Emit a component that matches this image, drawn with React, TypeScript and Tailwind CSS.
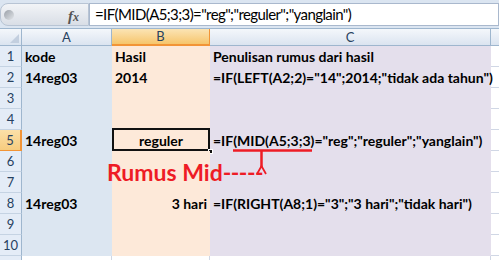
import React from "react";

const font = { fontFamily: "Lato, 'Open Sans', sans-serif" };

type Row = { n: number; a?: string; b?: string; bAlign?: "left" | "center" | "right"; c?: string; selB?: boolean };

const rows: Row[] = [
  { n: 1, a: "kode", b: "Hasil", c: "Penulisan rumus dari hasil" },
  { n: 2, a: "14reg03", b: "2014", c: '=IF(LEFT(A2;2)="14";2014;"tidak ada tahun")' },
  { n: 3 },
  { n: 4 },
  { n: 5, a: "14reg03", b: "reguler", bAlign: "center", c: '=IF(MID(A5;3;3)="reg";"reguler";"yanglain")', selB: true },
  { n: 6 },
  { n: 7 },
  { n: 8, a: "14reg03", b: "3 hari", bAlign: "right", c: '=IF(RIGHT(A8;1)="3";"3 hari";"tidak hari")' },
  { n: 9 },
  { n: 10 },
];

export default function App() {
  return (
    <div className="relative w-[499px] h-[260px] overflow-hidden bg-white" style={font}>
      {/* formula bar */}
      <div className="h-[29px] bg-[#dbe5f1] flex flex-col">
        <div className="h-[3px]" />
        <div className="h-[23px] flex">
          <div className="w-[89px] rounded-l-[8px] bg-gradient-to-b from-[#f2f4f7] to-[#d9dee6] border border-[#b8c4d4] flex items-center relative">
            <div className="ml-[3px] w-[10px] h-[10px] rounded-full bg-gradient-to-br from-[#9aa0a8] to-[#e3e6ea]" />
            <span
              className="absolute left-[67px] top-[1px] text-[15px] italic text-[#555] font-bold"
              style={{ fontFamily: "'Liberation Serif', serif" }}
            >
              f<span className="text-[12px]">x</span>
            </span>
          </div>
          <div className="flex-1 bg-white border border-[#a9b8cd] flex items-center pl-[5px] text-[15px] tracking-[-0.6px] text-black leading-none">
            =IF(MID(A5;3;3)="reg";"reguler";"yanglain")
          </div>
        </div>
        <div className="flex-1 border-b border-[#9eb6ce]" />
      </div>

      {/* column header */}
      <div className="flex h-[17px] text-[13px] text-[#27415f] leading-none">
        <div className="w-[22px] bg-gradient-to-b from-[#f4f7fb] to-[#dbe4f0] border-r border-b border-[#9eb6ce] relative">
          <div className="absolute right-[2px] bottom-[2px] w-0 h-0 border-l-[9px] border-l-transparent border-b-[9px] border-b-[#c3cfdf]" />
        </div>
        <div className="w-[90px] bg-gradient-to-b from-[#f4f7fb] to-[#dbe4f0] border-r border-b border-[#9eb6ce] flex items-center justify-center">A</div>
        <div className="w-[98px] bg-gradient-to-b from-[#fbe4b4] to-[#f6c56a] border-r border-[#f29436] border-b-2 border-b-[#f29436] flex items-center justify-center">B</div>
        <div className="w-[281px] bg-gradient-to-b from-[#f4f7fb] to-[#dbe4f0] border-r border-b border-[#9eb6ce] flex items-center justify-center">C</div>
        <div className="flex-1 bg-gradient-to-b from-[#f4f7fb] to-[#dbe4f0] border-b border-[#9eb6ce]" />
      </div>

      {/* rows */}
      {rows.map((r) => (
        <div key={r.n} className="flex h-[21px] text-[14px] leading-none">
          <div
            className={
              r.n === 5
                ? "w-[22px] bg-gradient-to-b from-[#fbe0a8] to-[#f7cc7e] border-r-2 border-[#f29436] border-b border-b-[#f29436] flex items-center justify-center text-[13px] text-[#27415f]"
                : "w-[22px] bg-[#e4ecf7] border-r border-[#9eb6ce] border-b border-b-[#c5d3e3] flex items-center justify-center text-[13px] text-[#27415f]"
            }
          >
            {r.n}
          </div>
          <div className="w-[90px] bg-[#dce6f1] flex items-center pl-[3px] font-bold text-black">{r.a}</div>
          <div
            className={
              "w-[98px] bg-[#fde9d9] flex items-center font-bold text-black px-[3px] relative " +
              (r.bAlign === "center" ? "justify-center" : r.bAlign === "right" ? "justify-end" : "justify-start")
            }
          >
            {r.b}
            {r.selB && (
              <>
                <div className="absolute left-0 right-0 top-[-2px] bottom-0 border-2 border-[#111]" />
                <div className="absolute right-[-3px] bottom-[-3px] w-[5px] h-[5px] bg-[#111] border border-white" />
              </>
            )}
          </div>
          <div className="w-[281px] bg-[#e4dfec] flex items-center pl-[3px] font-bold text-black whitespace-nowrap">{r.c}</div>
          <div className="flex-1 border-b border-[#d0d7e5]" />
        </div>
      ))}
      <div className="flex h-[21px]">
        <div className="w-[22px] bg-[#e4ecf7] border-r border-[#9eb6ce]" />
        <div className="w-[90px] border-r border-[#d0d7e5]" />
        <div className="w-[98px] border-r border-[#d0d7e5]" />
        <div className="w-[281px] border-r border-[#d0d7e5]" />
        <div className="flex-1" />
      </div>

      {/* annotation */}
      <div className="absolute left-[107px] top-[161px] text-[23px] font-bold text-[#ee1c25] leading-none whitespace-nowrap">
        Rumus Mid<span className="tracking-[-0.5px]">-----</span>
      </div>
      <svg className="absolute left-0 top-0" width="499" height="260" viewBox="0 0 499 260">
        <line x1="233" y1="150.5" x2="312" y2="150.5" stroke="#ee1c25" strokeWidth="2.5" />
        <line x1="261.5" y1="150" x2="261.5" y2="167" stroke="#ee1c25" strokeWidth="2.5" />
        <polyline points="257,174 261.5,166 266,174" fill="none" stroke="#ee1c25" strokeWidth="1.8" />
      </svg>
    </div>
  );
}
